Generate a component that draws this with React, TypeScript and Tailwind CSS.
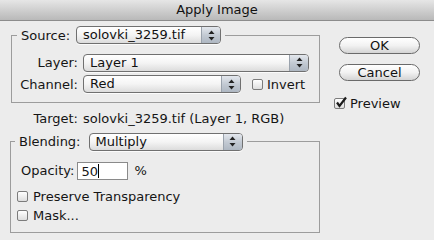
import React from "react";

const font = { fontFamily: '"DejaVu Sans", "Liberation Sans", sans-serif' };

function Arrows() {
    return (
        <svg width="7" height="11" viewBox="0 0 7 11" className="block">
            <path d="M3.5 0.5 L6.5 4 L0.5 4 Z" fill="#222" />
            <path d="M3.5 10.5 L6.5 7 L0.5 7 Z" fill="#222" />
        </svg>
    );
}

function Popup({ value, width }: { value: string; width: string }) {
    return (
        <div
            className={`${width} h-[18px] flex items-stretch rounded-[4px] border border-[#707070] overflow-hidden bg-gradient-to-b from-white via-[#f4f4f4] to-[#dcdcdc] shadow-[0_1px_0_rgba(255,255,255,0.8)]`}
        >
            <div className="flex-1 pl-[6px] leading-[16px] text-[13px] text-[#111] whitespace-nowrap overflow-hidden">
                {value}
            </div>
            <div className="w-[19px] border-l border-[#9aa2ac] flex items-center justify-center bg-gradient-to-b from-[#e4e8ee] via-[#c3cad3] to-[#aeb7c2]">
                <Arrows />
            </div>
        </div>
    );
}

function Checkbox({ checked = false }: { checked?: boolean }) {
    return (
        <div className="relative w-[11px] h-[11px] rounded-[2px] border border-[#7c7c7c] bg-gradient-to-b from-white to-[#dedede] shrink-0">
            {checked && (
                <svg width="13" height="13" viewBox="0 0 13 13" className="absolute -top-[3px] left-[0px]">
                    <path d="M2 6.5 L4.5 10 L11 1.5" stroke="#1a1a1a" strokeWidth="2.2" fill="none" />
                </svg>
            )}
        </div>
    );
}

function Button({ label }: { label: string }) {
    return (
        <div className="w-[81px] h-[17px] rounded-full border border-[#6a6a6a] bg-gradient-to-b from-white via-[#f2f2f2] to-[#d4d4d4] flex items-center justify-center text-[13px] leading-none text-[#111]">
            {label}
        </div>
    );
}

export default function App() {
    return (
        <div className="w-[434px] h-[240px] bg-[#ececec] overflow-hidden text-[13px] text-[#151515]" style={font}>
            <div className="h-[21px] border-b border-[#8c8c8c] bg-gradient-to-b from-[#e6e6e6] to-[#b9b9b9] flex items-center justify-center text-[13px] text-[#111]">
                Apply Image
            </div>

            <div className="flex pt-[5px]">
                <div className="w-[309px] ml-[11px]">
                    {/* Source group */}
                    <fieldset className="border border-[#9c9c9c] pb-[8px]">
                        <legend className="ml-[5px] px-[4px]">
                            <div className="flex items-center h-[18px]">
                                <span className="leading-none">Source:</span>
                                <div className="ml-[6px]">
                                    <Popup value="solovki_3259.tif" width="w-[145px]" />
                                </div>
                            </div>
                        </legend>
                        <div className="mt-[9px] flex flex-col gap-[2px]">
                            <div className="flex items-center gap-[5px]">
                                <span className="w-[66px] text-right">Layer:</span>
                                <Popup value="Layer 1" width="w-[226px]" />
                            </div>
                            <div className="flex items-center gap-[5px]">
                                <span className="w-[66px] text-right">Channel:</span>
                                <Popup value="Red" width="w-[158px]" />
                                <div className="ml-[6px] flex items-center gap-[4px]">
                                    <Checkbox />
                                    <span>Invert</span>
                                </div>
                            </div>
                        </div>
                    </fieldset>

                    <div className="mt-[8px] h-[16px] flex items-center gap-[5px]">
                        <span className="w-[67px] text-right">Target:</span>
                        <span>solovki_3259.tif (Layer 1, RGB)</span>
                    </div>

                    {/* Blending group */}
                    <fieldset className="mt-[5px] -ml-[1px] border border-[#9c9c9c] pb-[7px]">
                        <legend className="ml-[4px] px-[4px]">
                            <div className="flex items-center h-[19px]">
                                <span className="leading-none">Blending:</span>
                                <div className="ml-[8px]">
                                    <Popup value="Multiply" width="w-[154px]" />
                                </div>
                            </div>
                        </legend>
                        <div className="mt-[11px] pl-[10px] flex items-center h-[18px]">
                            <span>Opacity:</span>
                            <div className="ml-[3px] w-[51px] h-[18px] border border-[#8a8a8a] bg-white flex items-center pl-[3px]">
                                <span className="leading-none">50</span>
                                <span className="w-[1px] h-[14px] bg-black" />
                            </div>
                            <span className="ml-[6px]">%</span>
                        </div>
                        <div className="mt-[7px] pl-[6px] flex flex-col">
                            <div className="h-[19px] flex items-center gap-[5px]">
                                <Checkbox />
                                <span>Preserve Transparency</span>
                            </div>
                            <div className="h-[19px] flex items-center gap-[5px]">
                                <Checkbox />
                                <span>Mask...</span>
                            </div>
                        </div>
                    </fieldset>
                </div>

                <div className="ml-[14px] pt-[11px] flex flex-col">
                    <div className="ml-[5px] flex flex-col gap-[10px]">
                        <Button label="OK" />
                        <Button label="Cancel" />
                    </div>
                    <div className="mt-[13px] flex items-center gap-[5px]">
                        <Checkbox checked />
                        <span>Preview</span>
                    </div>
                </div>
            </div>
        </div>
    );
}
